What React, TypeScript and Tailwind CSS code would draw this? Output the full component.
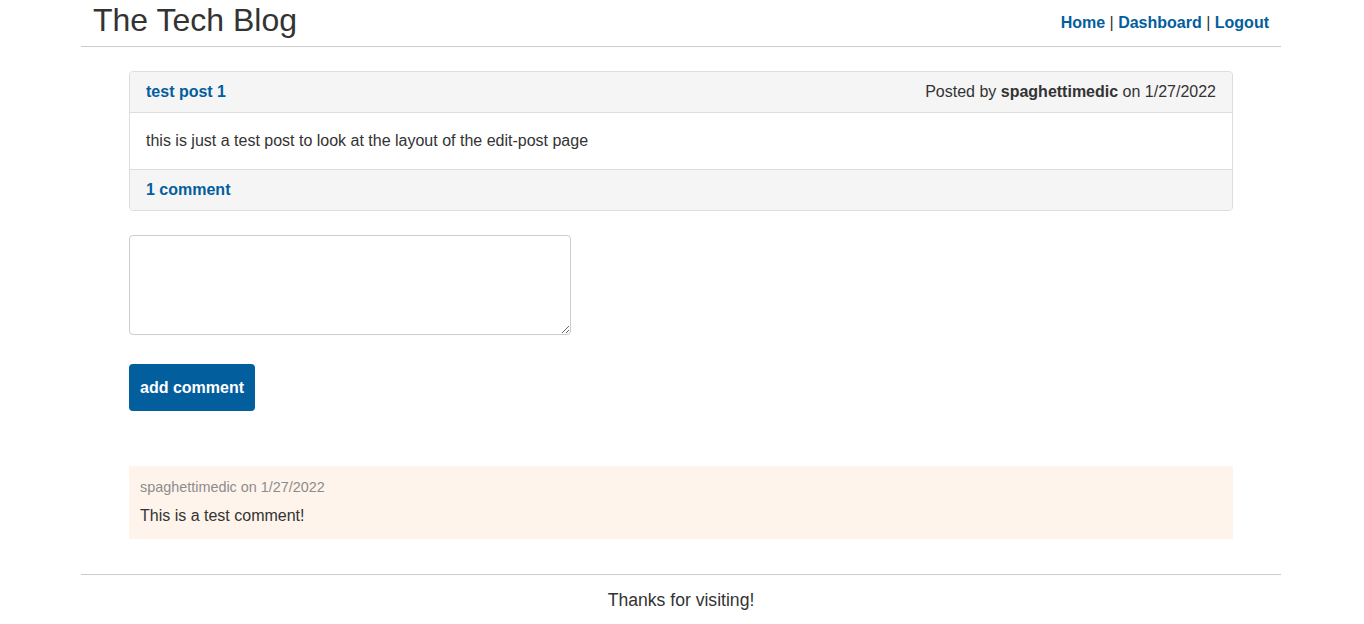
const link = 'text-[#035e9e] font-bold';

function Header() {
  return (
    <header className="flex items-start justify-between h-[47px] border-b border-[#cccccc] px-3">
      <h1 className="text-[32px] leading-[38px] text-[#333333] pt-[1px]">The Tech Blog</h1>
      <nav className="text-[16px] leading-[20px] text-[#333333] pt-[13px]">
        <a className={link} href="#">Home</a> | <a className={link} href="#">Dashboard</a> |{' '}
        <a className={link} href="#">Logout</a>
      </nav>
    </header>
  );
}

function PostCard() {
  return (
    <div className="border border-[#dddddd] rounded-[4px] overflow-hidden">
      <div className="flex justify-between items-center h-[41px] px-4 bg-[#f5f5f5] border-b border-[#dddddd]">
        <a className={link} href="#">test post 1</a>
        <span className="text-[#333333]">
          Posted by <strong>spaghettimedic</strong> on 1/27/2022
        </span>
      </div>
      <div className="h-[56px] flex items-center px-4 text-[#333333]">
        this is just a test post to look at the layout of the edit-post page
      </div>
      <div className="h-[41px] flex items-center px-4 pb-[1px] bg-[#f5f5f5] border-t border-[#dddddd]">
        <a className={link} href="#">1 comment</a>
      </div>
    </div>
  );
}

export default function App() {
  return (
    <div className="min-h-[624px] bg-white" style={{ fontFamily: '"Liberation Sans", Arial, sans-serif' }}>
      <div className="w-[1200px] ml-[81px]">
        <Header />

        <main className="w-[1104px] mx-auto pt-[24px]">
          <PostCard />

          <form className="mt-[24px]">
            <textarea className="block w-[442px] h-[100px] border border-[#cccccc] rounded-[4px] p-2 resize" />
            <button
              type="button"
              className="mt-[29px] w-[126px] h-[47px] bg-[#035e9e] text-white font-bold text-[16px] rounded-[4px]"
            >
              add comment
            </button>
          </form>

          <div className="mt-[55px] bg-[#fef4eb] pl-[11px] pt-[11px] pb-[11px]">
            <p className="text-[14.4px] leading-[20px] text-[#8c8c8c] mb-[7px]">spaghettimedic on 1/27/2022</p>
            <p className="text-[16px] leading-[24px] text-[#333333]">This is a test comment!</p>
          </div>
        </main>

        <footer className="mt-[35px] border-t border-[#cccccc] pt-[13px] pb-[11px] text-center">
          <p className="text-[17.6px] leading-[24px] text-[#333333]">Thanks for visiting!</p>
        </footer>
      </div>
    </div>
  );
}
